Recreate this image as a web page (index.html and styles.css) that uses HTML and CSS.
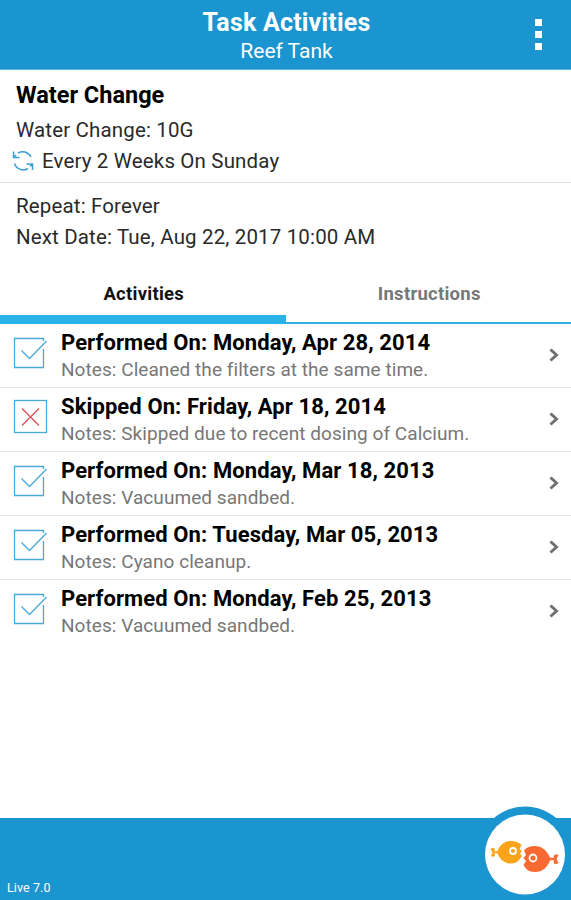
FILE: index.html
```html
<!DOCTYPE html>
<html lang="en">
<head>
    <meta charset="UTF-8">
    <meta name="viewport" content="width=device-width, initial-scale=1.0">
    <title>Task Activities</title>
    <link rel="stylesheet" href="styles.css">
</head>
<body>

    <!-- Shared icons -->
    <svg class="icon-defs" width="0" height="0">
        <symbol id="icon-check" viewBox="0 0 36 36">
            <path d="M30.5 6V3.5H1.5V32.5H30.5V14" />
            <path d="M8.5 15.5L16.5 23.5L33.5 6" />
        </symbol>
        <symbol id="icon-skip" viewBox="0 0 36 36">
            <rect x="1.5" y="1.5" width="32" height="32" />
            <path class="cross" d="M9 9.5L26 26.5M26 9.5L9 26.5" />
        </symbol>
        <symbol id="icon-chevron" viewBox="0 0 10 14">
            <path d="M1.5 1.5L7.5 7L1.5 12.5" />
        </symbol>
    </svg>

    <header>
        <h1>Task Activities</h1>
        <p>Reef Tank</p>
        <div class="menu"><i></i><i></i><i></i></div>
    </header>

    <main>
        <section class="task">
            <h2>Water Change</h2>
            <p class="detail">Water Change: 10G</p>
            <p class="schedule">
                <svg class="repeat-icon" width="22" height="22" viewBox="0 0 22 22">
                    <path d="M1.5 1.5V7.5H7.5M2 7L4 5M6 3C10.5 .5 16 1.5 19 7" />
                    <path d="M20.5 20V14H14.5M20 14.5L18 16.5M16 18.5C11 21.500 4.500 19.500 2.500 13.500" />
                </svg>
                <span>Every 2 Weeks On Sunday</span>
            </p>
        </section>

        <section class="dates">
            <p class="repeat">Repeat: Forever</p>
            <p class="next">Next Date: Tue, Aug 22, 2017 10:00 AM</p>
        </section>

        <nav class="tabs">
            <a class="tab active">Activities</a>
            <a class="tab">Instructions</a>
        </nav>

        <ul class="activities">
            <li>
                <svg class="status"><use href="#icon-check" /></svg>
                <div class="info">
                    <h3>Performed On: Monday, Apr 28, 2014</h3>
                    <p>Notes: Cleaned the filters at the same time.</p>
                </div>
                <svg class="chevron"><use href="#icon-chevron" /></svg>
            </li>
            <li>
                <svg class="status"><use href="#icon-skip" /></svg>
                <div class="info">
                    <h3>Skipped On: Friday, Apr 18, 2014</h3>
                    <p>Notes: Skipped due to recent dosing of Calcium.</p>
                </div>
                <svg class="chevron"><use href="#icon-chevron" /></svg>
            </li>
            <li>
                <svg class="status"><use href="#icon-check" /></svg>
                <div class="info">
                    <h3>Performed On: Monday, Mar 18, 2013</h3>
                    <p>Notes: Vacuumed sandbed.</p>
                </div>
                <svg class="chevron"><use href="#icon-chevron" /></svg>
            </li>
            <li>
                <svg class="status"><use href="#icon-check" /></svg>
                <div class="info">
                    <h3>Performed On: Tuesday, Mar 05, 2013</h3>
                    <p>Notes: Cyano cleanup.</p>
                </div>
                <svg class="chevron"><use href="#icon-chevron" /></svg>
            </li>
            <li>
                <svg class="status"><use href="#icon-check" /></svg>
                <div class="info">
                    <h3>Performed On: Monday, Feb 25, 2013</h3>
                    <p>Notes: Vacuumed sandbed.</p>
                </div>
                <svg class="chevron"><use href="#icon-chevron" /></svg>
            </li>
        </ul>
    </main>

    <footer>
        <span>Live 7.0</span>
        <svg class="logo" width="98" height="98" viewBox="-3 0 98 98">
            <circle class="rim" cx="46" cy="48.5" r="48" />
            <circle class="disc" cx="46" cy="48.5" r="40" />
            <path class="fish-yellow" d="M18.5 45C21 38.5 26 35 32 35C36.5 35 40 36.500 42.500 39L40.500 43L43 45L41 47.500L43 50L40.500 53.500C38 56.500 35 57.500 32 57.500C26 57.500 21 54 18.500 47.500L15.500 47C17 51 14 51.500 12 50L13.500 46.500L11.500 43C14 41 17 42 15.500 45.500Z" />
            <circle class="eye" cx="34" cy="45" r="3" />
            <path class="fish-orange" d="M71 51.5C68 44.500 63 40 55.500 40C51 40 47 41.500 45 44.500L47 49L44.500 52L47 55L44.500 59L46.500 62C49 65 52 66 56 66C63 66 68.500 61.500 71 54.500L75 54C73.500 58.500 77 59 79.500 57L77.500 53L79.500 49C77 48 73.500 48.500 75 52Z" />
            <circle class="eye" cx="54" cy="52" r="3.5" />
        </svg>
    </footer>

</body>
</html>
```
FILE: styles.css
```css
* {
    box-sizing: border-box;
}
body {
    font-family: Roboto, sans-serif;
    margin: 0;
    background-color: #fff;
    color: #2a2a2a;
    display: flex;
    flex-direction: column;
    height: 100vh;
    overflow: hidden;
}
h1, h2, h3, p, ul {
    margin: 0;
    padding: 0;
}
.icon-defs {
    position: absolute;
}
header {
    position: relative;
    height: 70px;
    padding: 7px 0 0 2px;
    background-color: #1b95d0;
    border-bottom: 1px solid #5db1db;
    color: #fff;
    text-align: center;
}
header h1 {
    font-size: 25px;
    line-height: 31px;
    letter-spacing: 0.2px;
}
header p {
    font-size: 21px;
    line-height: 26px;
}
.menu {
    position: absolute;
    top: 19px;
    right: 29px;
    display: flex;
    flex-direction: column;
    gap: 5px;
}
.menu i {
    width: 7px;
    height: 7px;
    background-color: #fff;
}
main {
    flex: 1;
}
.task {
    height: 113px;
    padding: 10px 16px 0;
    border-bottom: 1px solid #ddd;
}
.task h2 {
    font-size: 23.5px;
    line-height: 31px;
    color: #000;
}
.task p,
.dates p {
    font-size: 20.5px;
    line-height: 31px;
    letter-spacing: 0.15px;
}
.task .detail {
    padding-top: 4px;
    line-height: 31px;
}
.task .schedule {
    display: flex;
    align-items: center;
    gap: 8px;
    margin-left: -4px;
    line-height: 30px;
}
.repeat-icon {
    fill: none;
    stroke: #3b9fd8;
    stroke-width: 1.5;
}
.dates {
    height: 81px;
    padding: 8px 16px 0;
}
.tabs {
    display: flex;
    height: 60px;
    border-bottom: 2px solid #35afe0;
}
.tab {
    flex: 1;
    height: 60px;
    padding: 18px 0 0 2px;
    font-size: 18.5px;
    line-height: 24px;
    letter-spacing: 0.25px;
    font-weight: bold;
    text-align: center;
    color: #777;
}
.tab.active {
    color: #111;
    border-bottom: 9px solid #2ab3e6;
}
.activities {
    list-style: none;
}
.activities li {
    display: flex;
    height: 64px;
    padding: 3px 12px 0 13px;
    border-bottom: 1px solid #e8e8e8;
}
.activities li:last-child {
    border-bottom: none;
}
.status {
    width: 36px;
    height: 36px;
    margin-top: 8px;
    fill: none;
    stroke: #4aa9db;
    stroke-width: 1.3;
}
.cross {
    stroke: #dd5058;
}
.info {
    flex: 1;
    padding: 1px 0 0 12px;
}
.info h3 {
    font-size: 22px;
    line-height: 30px;
    letter-spacing: 0.1px;
    color: #000;
}
.info p {
    font-size: 19px;
    line-height: 23px;
    letter-spacing: 0.06px;
    color: #777;
}
.chevron {
    width: 10px;
    height: 14px;
    margin-top: 21px;
    fill: none;
    stroke: #707070;
    stroke-width: 3;
}
footer {
    position: relative;
    display: flex;
    align-items: flex-end;
    height: 82px;
    padding: 0 7px 4px;
    background-color: #1b95d0;
    color: #fff;
}
footer span {
    font-size: 12.5px;
    line-height: 16px;
    letter-spacing: 0.1px;
}
.logo {
    position: absolute;
    right: -3px;
    bottom: -4px;
}
.logo .rim {
    fill: #1b95d0;
}
.logo .disc {
    fill: #fff;
}
.fish-yellow {
    fill: #fba41a;
}
.fish-orange {
    fill: #f96a32;
}
.eye {
    fill: none;
    stroke: #fff;
    stroke-width: 1.8;
}
```
